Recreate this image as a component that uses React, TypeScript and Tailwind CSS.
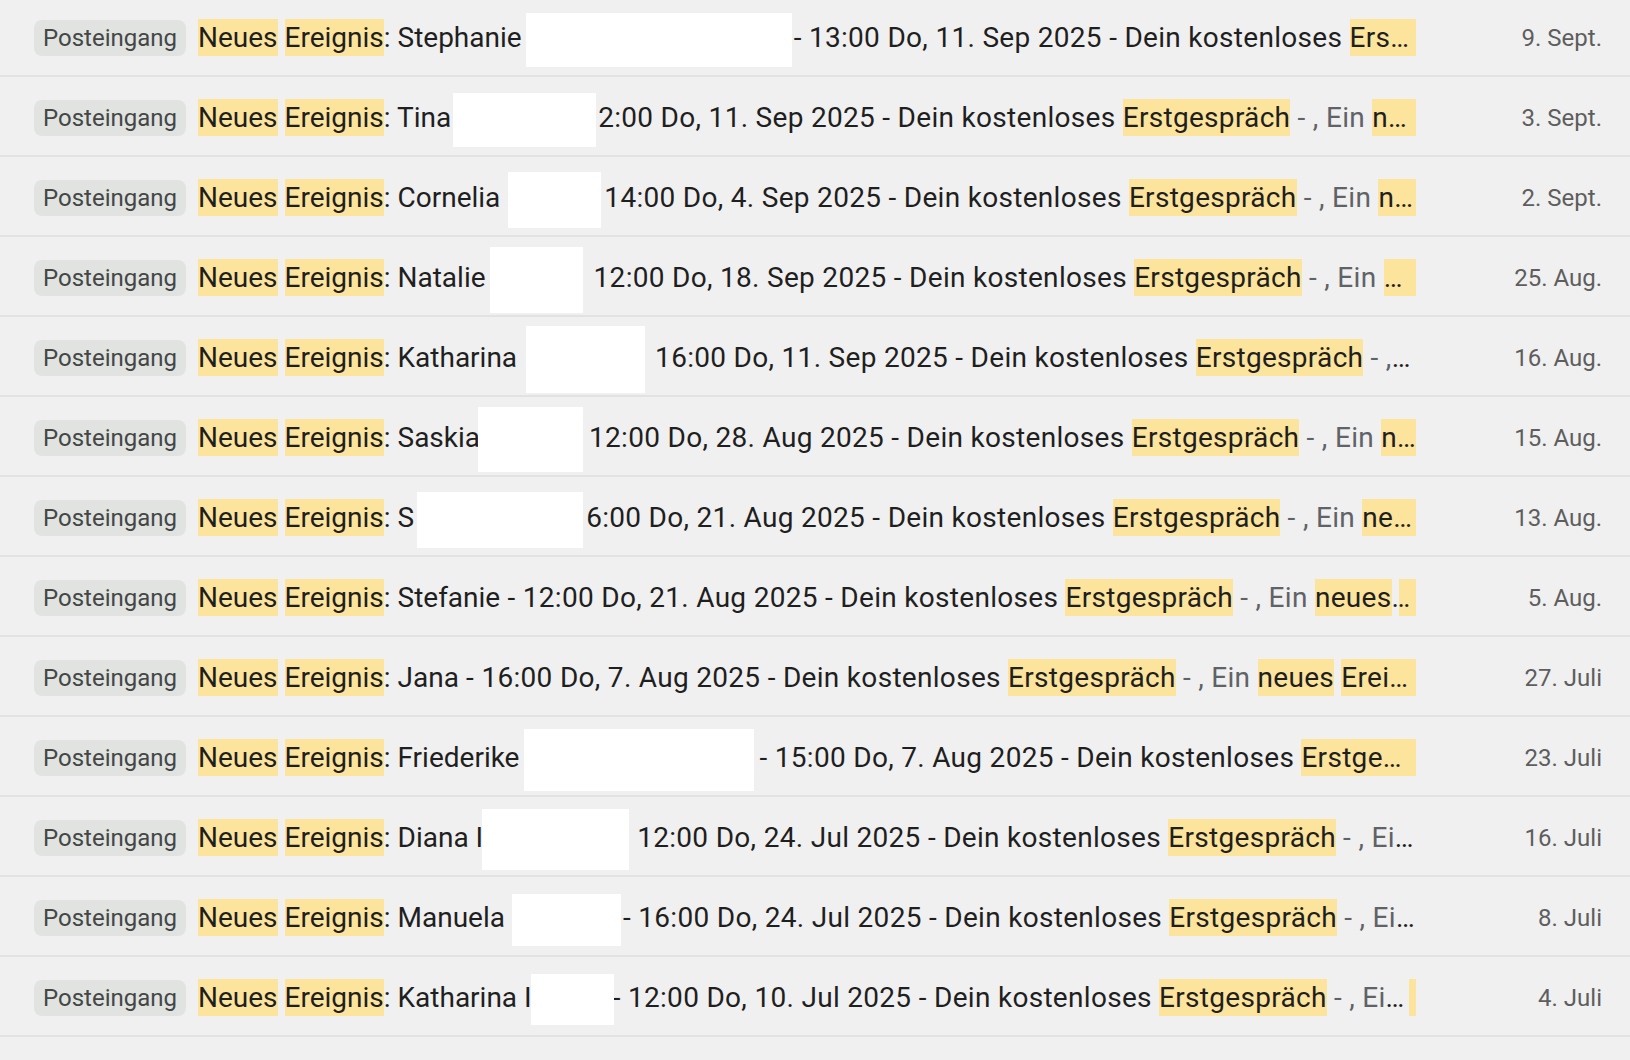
import React from 'react';

interface Redact {
  ml: number;
  w: number;
  h: number;
  mr: number;
}

interface Row {
  name: string;
  box?: Redact;
  after: string;
  date: string;
}

const rows: Row[] = [
  { name: 'Stephanie', box: { ml: 4, w: 266, h: 54, mr: 2 }, after: '- 13:00 Do, 11. Sep 2025', date: '9. Sept.' },
  { name: 'Tina', box: { ml: 2, w: 143, h: 54, mr: 2 }, after: '2:00 Do, 11. Sep 2025', date: '3. Sept.' },
  { name: 'Cornelia', box: { ml: 8, w: 93, h: 56, mr: 3 }, after: '14:00 Do, 4. Sep 2025', date: '2. Sept.' },
  { name: 'Natalie', box: { ml: 4, w: 93, h: 66, mr: 11 }, after: '12:00 Do, 18. Sep 2025', date: '25. Aug.' },
  { name: 'Katharina', box: { ml: 9, w: 119, h: 67, mr: 10 }, after: '16:00 Do, 11. Sep 2025', date: '16. Aug.' },
  { name: 'Saskia', box: { ml: -2, w: 105, h: 65, mr: 6 }, after: '12:00 Do, 28. Aug 2025', date: '15. Aug.' },
  { name: 'S', box: { ml: 3, w: 166, h: 56, mr: 3 }, after: '6:00 Do, 21. Aug 2025', date: '13. Aug.' },
  { name: 'Stefanie', after: ' - 12:00 Do, 21. Aug 2025', date: '5. Aug.' },
  { name: 'Jana', after: ' - 16:00 Do, 7. Aug 2025', date: '27. Juli' },
  { name: 'Friederike', box: { ml: 5, w: 230, h: 62, mr: 5 }, after: '- 15:00 Do, 7. Aug 2025', date: '23. Juli' },
  { name: 'Diana I', box: { ml: -1, w: 147, h: 61, mr: 8 }, after: '12:00 Do, 24. Jul 2025', date: '16. Juli' },
  { name: 'Manuela', box: { ml: 7, w: 109, h: 52, mr: 2 }, after: '- 16:00 Do, 24. Jul 2025', date: '8. Juli' },
  { name: 'Katharina I', box: { ml: -1, w: 83, h: 51, mr: -1 }, after: '- 12:00 Do, 10. Jul 2025', date: '4. Juli' },
];

function Hl({ children }: { children: React.ReactNode }) {
  return <span className="bg-[#fce49c] py-[2px] text-[#1f1f1f]">{children}</span>;
}

function MailRow({ row }: { row: Row }) {
  return (
    <div className="flex h-[80px] items-center border-b-2 border-[#e2e2e4] pl-[34px] pr-[28px] pt-[4px]">
      <span className="flex h-[36px] shrink-0 items-center rounded-[8px] bg-[#e1e3e1] px-[9px] text-[24px] text-[#444746]">
        Posteingang
      </span>
      <div className="-my-[22px] ml-[12px] min-w-0 flex-1 overflow-hidden text-ellipsis whitespace-nowrap py-[22px] text-[28px] leading-[36px] text-[#1f1f1f]">
        <Hl>Neues</Hl> <Hl>Ereignis</Hl>: {row.name}
        {row.box && (
          <span
            className="relative z-10 inline-block bg-white align-middle"
            style={{
              width: row.box.w,
              height: row.box.h,
              marginLeft: row.box.ml,
              marginRight: row.box.mr,
              marginTop: -20,
              marginBottom: -20,
            }}
          />
        )}
        <span className="tracking-[0.3px]">
          {row.after} - Dein kostenloses <Hl>Erstgespräch</Hl>
          <span className="text-[#5f6368]">
            {' - , Ein '}
            <Hl>neues</Hl> <Hl>Ereignis</Hl> wurde zu deinem Kalender hinzugefügt
          </span>
        </span>
      </div>
      <span className="w-[186px] shrink-0 text-right text-[24px] text-[#5e5e5e]">{row.date}</span>
    </div>
  );
}

export default function App() {
  return (
    <div
      className="h-[1060px] w-[1630px] overflow-hidden bg-[#f0f0f0]"
      style={{ fontFamily: 'Roboto, "Noto Sans", sans-serif' }}
    >
      <div className="-mt-[3px]">
        {rows.map((row, i) => (
          <MailRow key={i} row={row} />
        ))}
      </div>
    </div>
  );
}
